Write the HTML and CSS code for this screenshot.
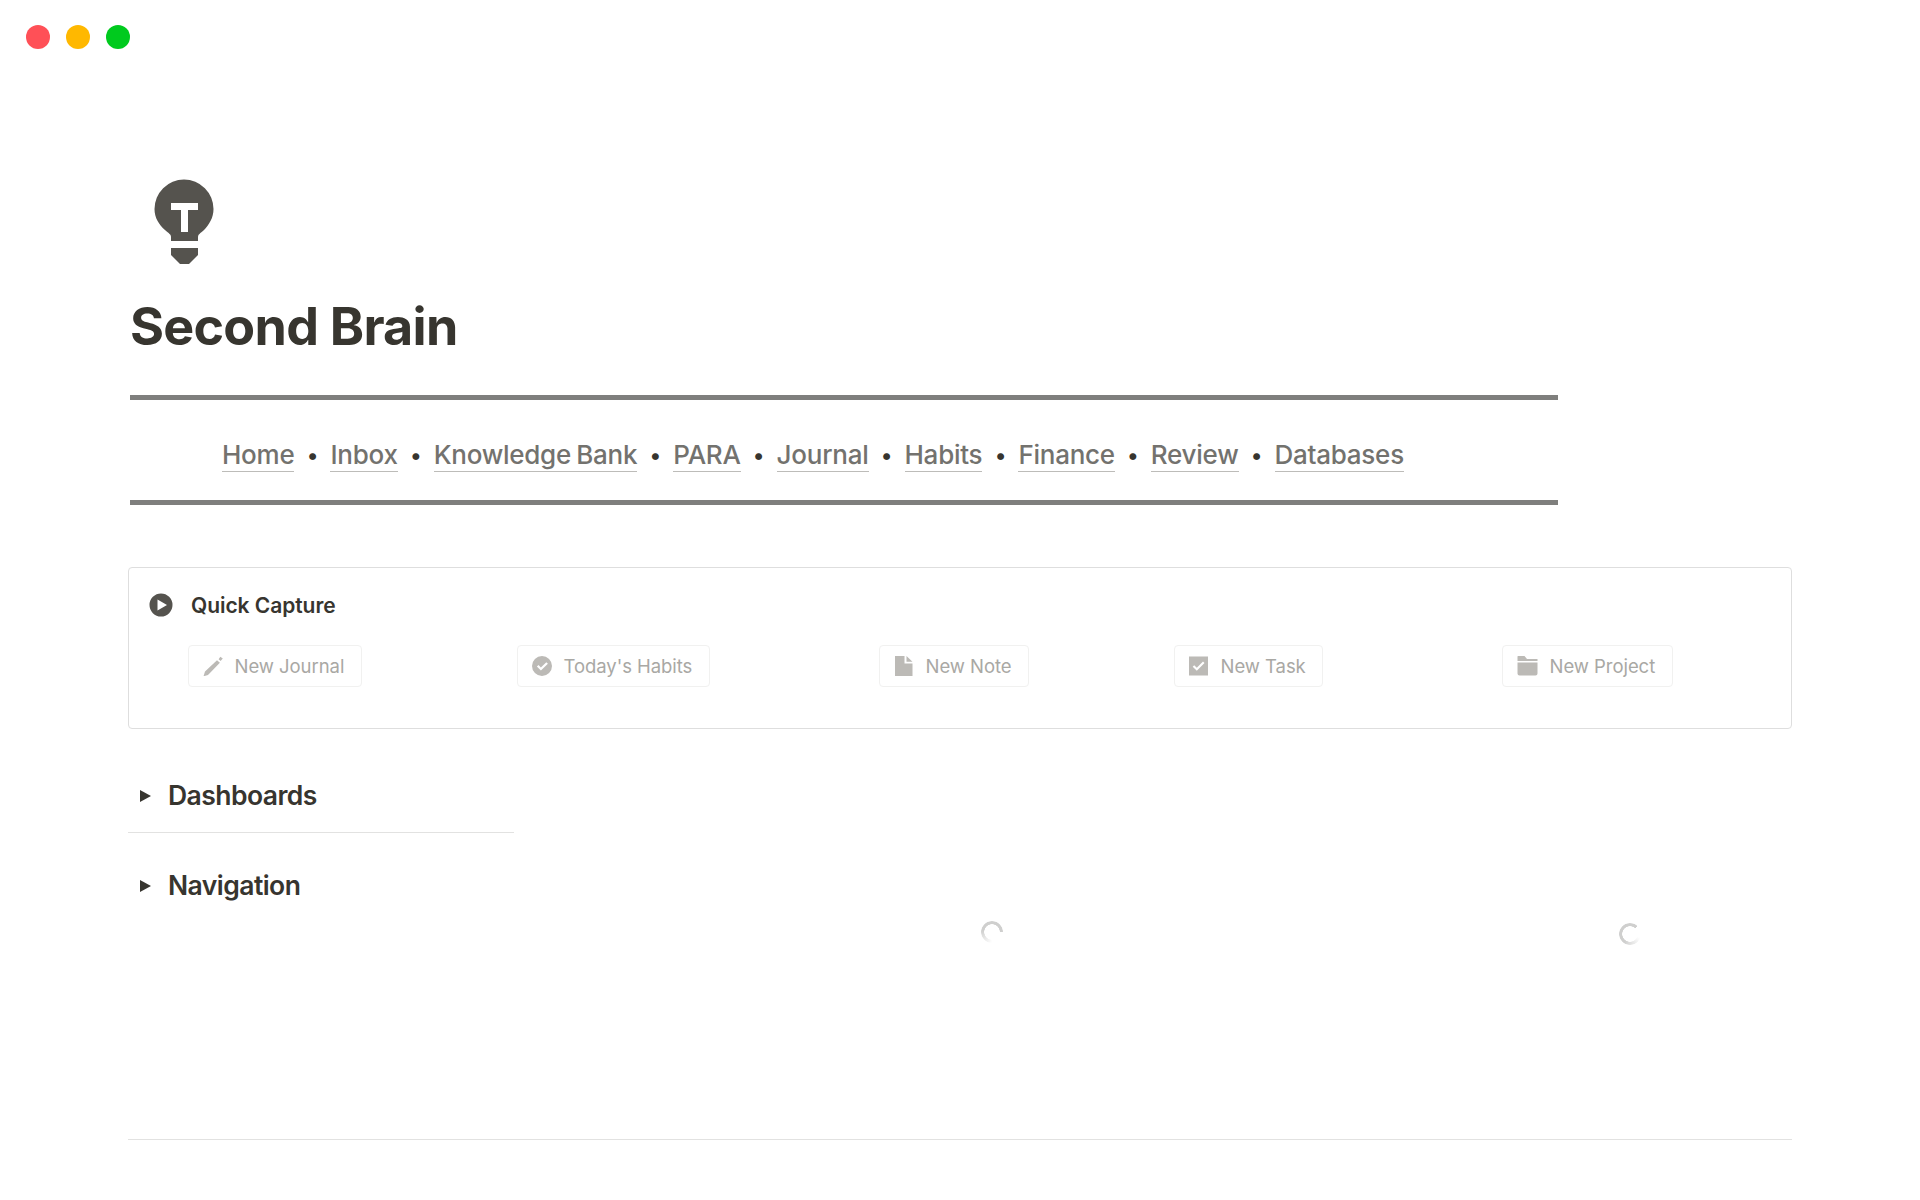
FILE: index.html
```html
<!DOCTYPE html>
<html lang="en">
<head>
<meta charset="utf-8">
<title>Second Brain</title>
<link rel="stylesheet" href="styles.css">
</head>
<body>
<div class="traffic">
  <span class="dot dot-red"></span>
  <span class="dot dot-yellow"></span>
  <span class="dot dot-green"></span>
</div>
<main class="page">
  <svg class="bulb" width="68" height="90" viewBox="0 0 68 90" aria-hidden="true">
    <path fill="#55534e" fill-rule="evenodd" d="M21 64V60C21 57.500 19 56.500 15 53C9 47.500 4.500 41 4.500 32A29.500 29.500 0 0 1 63.500 32C63.500 41 59 47.500 54 53C50 56.500 48 57.500 48 60V64ZM21 26V33H31V55H38V33H48V26Z"/>
    <path fill="#55534e" d="M21 71H48V78L39 87H30L21 78Z"/>
  </svg>
  <h1 class="title">Second Brain</h1>
  <hr class="rule-thick">
  <nav class="nav">
    <a class="nav-link">Home</a><span class="sep">•</span>
    <a class="nav-link">Inbox</a><span class="sep">•</span>
    <a class="nav-link">Knowledge Bank</a><span class="sep">•</span>
    <a class="nav-link">PARA</a><span class="sep">•</span>
    <a class="nav-link">Journal</a><span class="sep">•</span>
    <a class="nav-link">Habits</a><span class="sep">•</span>
    <a class="nav-link">Finance</a><span class="sep">•</span>
    <a class="nav-link">Review</a><span class="sep">•</span>
    <a class="nav-link">Databases</a>
  </nav>
  <hr class="rule-thick">

  <section class="card">
    <div class="card-head">
      <svg class="play" width="24" height="24" viewBox="0 0 24 24" aria-hidden="true">
        <path fill="#55534e" fill-rule="evenodd" d="M12 .5a11.500 11.500 0 1 0 0 23a11.500 11.500 0 0 0 0-23ZM8.500 6.500L18 12L8.500 17.500Z"/>
      </svg>
      <span class="card-title">Quick Capture</span>
    </div>
    <div class="actions">
      <div class="action-cell">
        <button class="action">
          <svg width="20" height="20" viewBox="0 0 20 20" aria-hidden="true"><path fill="#bcbab6" d="M15.600 3.300L17.300 .8 19.800 2.600 17.600 5ZM14 4.200L16.900 6.800 5 19 .5 20.300 2 15.500Z"/></svg>
          New Journal
        </button>
      </div>
      <div class="action-cell">
        <button class="action">
          <svg width="20" height="20" viewBox="0 0 20 20" aria-hidden="true"><path fill="#bcbab6" fill-rule="evenodd" d="M10 0a10 10 0 1 0 0 20a10 10 0 0 0 0-20ZM14.300 6.200L15.900 7.700 8.900 14.500 4.900 10.600 6.500 9.100 8.900 11.400Z"/></svg>
          Today's Habits
        </button>
      </div>
      <div class="action-cell">
        <button class="action">
          <svg width="20" height="20" viewBox="0 0 20 20" aria-hidden="true"><path fill="#bcbab6" d="M1 0H10.500V7.500H18.500V21H1ZM12.500 0L18.500 5.700H12.500Z"/></svg>
          New Note
        </button>
      </div>
      <div class="action-cell">
        <button class="action">
          <svg width="20" height="20" viewBox="0 0 20 20" aria-hidden="true"><path fill="#bcbab6" fill-rule="evenodd" d="M0 .5H19V19.500H0ZM14 5.500L7.800 11.700 5.200 9.200 3.700 10.700 7.800 14.700 15.500 7Z"/></svg>
          New Task
        </button>
      </div>
      <div class="action-cell">
        <button class="action">
          <svg width="21" height="20" viewBox="0 0 21 20" aria-hidden="true"><path fill="#bcbab6" d="M.5 3V.5Q.5 0 1 0H7.500L10 3H20.500V5H.5ZM.5 6.500H20.500V17.500Q20.500 19.500 18.500 19.500H2.500Q.5 19.500 .5 17.500Z"/></svg>
          New Project
        </button>
      </div>
    </div>
  </section>

  <div class="lower">
    <div class="toggles">
      <div class="toggle">
        <span class="caret"></span>
        <h3 class="toggle-title">Dashboards</h3>
      </div>
      <hr class="rule-thin">
      <div class="toggle">
        <span class="caret"></span>
        <h3 class="toggle-title">Navigation</h3>
      </div>
    </div>
    <div class="spinner-cell"><span class="spinner spinner-a"></span></div>
    <div class="spinner-cell spinner-cell-low"><span class="spinner spinner-b"></span></div>
  </div>
  <hr class="rule-foot">
</main>
</body>
</html>
```

FILE: styles.css
```css
* { box-sizing: border-box; }
html, body { margin: 0; padding: 0; background: #fff; }
body {
  height: 1200px;
  overflow: hidden;
  font-family: Inter, "Liberation Sans", sans-serif;
  color: #37352f;
}
.traffic {
  display: flex;
  gap: 16px;
  padding: 25px 26px 0;
}
.dot { width: 24px; height: 24px; border-radius: 50%; }
.dot-red { background: #ff5057; }
.dot-yellow { background: #ffb800; }
.dot-green { background: #00ca1e; }

.page { padding: 128px 128px 0; width: 1920px; }
.bulb { display: block; margin-left: 22px; }
.title {
  margin: 0 0 0 2px;
  padding-top: 28px;
  font-size: 52px;
  line-height: 63px;
  font-weight: 700;
  letter-spacing: -0.75px;
  color: #37352f;
}
.rule-thick {
  width: 1428px;
  height: 5px;
  margin: 0 0 0 2px;
  border: 0;
  background: #7f7f7d;
}
.title + .rule-thick { margin-top: 37px; }
.nav {
  display: flex;
  align-items: center;
  height: 100px;
  padding: 10px 0 0 94px;
  font-size: 26px;
  font-weight: 500;
  letter-spacing: -0.25px;
  word-spacing: -1.500px;
}
.nav-link {
  color: #73726e;
  line-height: 33px;
  border-bottom: 1px solid #bdbcb9;
}
.sep {
  width: 36px;
  text-align: center;
  font-size: 22px;
  color: #37352f;
}

.card {
  height: 162px;
  margin-top: 62px;
  border: 1px solid #dedede;
  border-radius: 4px;
  padding: 25px 0 0 20px;
}
.card-head {
  display: flex;
  align-items: center;
  gap: 18px;
  height: 24px;
}
.card-title {
  font-size: 21px;
  font-weight: 600;
  letter-spacing: -0.05px;
  color: #37352f;
}
.actions {
  display: grid;
  grid-template-columns: 329px 362px 295px 328px 1fr;
  margin: 28px 0 0 39px;
}
.action-cell { display: flex; }
.action {
  display: flex;
  align-items: center;
  gap: 11.500px;
  height: 42px;
  padding: 0 16.500px 0 14px;
  background: #fff;
  border: 1px solid #f1f1f0;
  border-radius: 4px;
  font-family: inherit;
  font-size: 18.500px;
  letter-spacing: -0.05px;
  color: #a9a8a4;
}

.lower {
  display: grid;
  grid-template-columns: 388px 952px 324px;
  height: 410px;
}
.toggles { padding-top: 46px; }
.toggle {
  display: flex;
  align-items: center;
  height: 40px;
  padding-left: 12px;
  gap: 17px;
}
.caret {
  width: 0;
  height: 0;
  margin-top: 2px;
  border-left: 11px solid #37352f;
  border-top: 6.500px solid transparent;
  border-bottom: 6.500px solid transparent;
}
.toggle-title {
  margin: 0;
  font-size: 26.500px;
  font-weight: 600;
  letter-spacing: -0.55px;
  color: #37352f;
}
.rule-thin {
  width: 386px;
  height: 1px;
  margin: 17px 0 32px;
  border: 0;
  background: #e2e2e1;
}
.spinner-cell {
  display: flex;
  justify-content: center;
  padding-top: 192px;
}
.spinner-cell-low { padding-top: 194px; }
.spinner {
  display: block;
  width: 22px;
  height: 22px;
  border-radius: 50%;
  -webkit-mask: radial-gradient(circle, transparent 7.500px, #000 8px);
  mask: radial-gradient(circle, transparent 7.500px, #000 8px);
}
.spinner-a { background: conic-gradient(from 90deg, transparent 0 90deg, #cfcfce 190deg, #cfcfce 360deg); }
.spinner-b { background: conic-gradient(from 45deg, transparent 0 65deg, #cfcfce 170deg, #cfcfce 360deg); }
.rule-foot {
  width: 1664px;
  height: 1px;
  margin: 0;
  border: 0;
  background: #e2e2e1;
}
```
